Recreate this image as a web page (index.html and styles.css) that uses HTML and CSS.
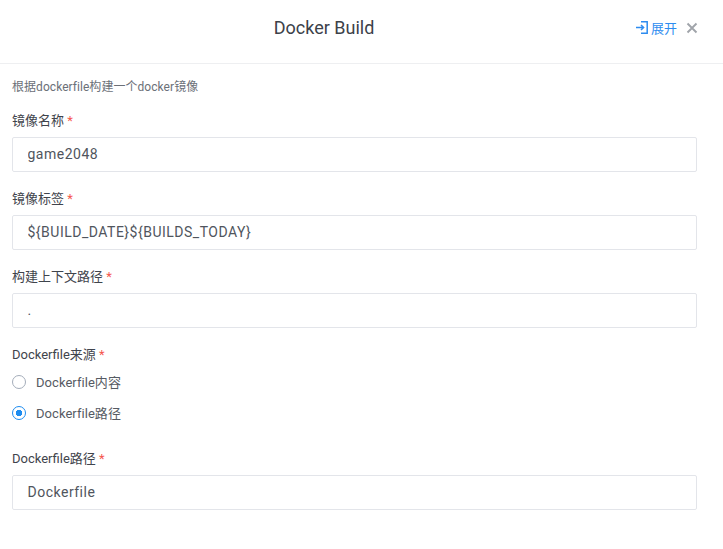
FILE: index.html
```html
<!DOCTYPE html>
<html lang="en">

<head>
    <meta charset="UTF-8">
    <meta name="viewport" content="width=device-width, initial-scale=1.0">
    <title>Docker Build</title>
    <link rel="stylesheet" href="styles.css">
</head>

<body>

    <header class="panel-header">
        <h1 class="panel-title">Docker Build</h1>
        <div class="panel-actions">
            <a class="expand-link">
                <svg class="expand-icon" width="12" height="13" viewBox="0 0 12 13" fill="none" stroke="#2d8cf0" stroke-width="1.5">
                    <path d="M5 .8h6.200v11.400H5" />
                    <path d="M0 6.500h7.500M5 4l2.600 2.500L5 9" />
                </svg>
                <span>展开</span>
            </a>
            <svg class="close-icon" width="12" height="12" viewBox="0 0 12 12" fill="none" stroke="#a0a4aa" stroke-width="1.9">
                <path d="M1.500 1.500l9 9M10.500 1.500l-9 9" />
            </svg>
        </div>
    </header>

    <form class="panel-body">
        <p class="hint">根据dockerfile构建一个docker镜像</p>

        <div class="field">
            <label class="field-label">镜像名称 <span class="required">*</span></label>
            <input class="text-input" type="text" value="game2048">
        </div>

        <div class="field">
            <label class="field-label">镜像标签 <span class="required">*</span></label>
            <input class="text-input" type="text" value="${BUILD_DATE}${BUILDS_TODAY}">
        </div>

        <div class="field">
            <label class="field-label">构建上下文路径 <span class="required">*</span></label>
            <input class="text-input" type="text" value=".">
        </div>

        <div class="field field-radio">
            <label class="field-label label-tight">Dockerfile来源 <span class="required">*</span></label>
            <div class="radio-row">
                <span class="radio"></span>
                <span class="radio-text">Dockerfile内容</span>
            </div>
            <div class="radio-row">
                <span class="radio radio-checked"></span>
                <span class="radio-text">Dockerfile路径</span>
            </div>
        </div>

        <div class="field">
            <label class="field-label">Dockerfile路径 <span class="required">*</span></label>
            <input class="text-input" type="text" value="Dockerfile">
        </div>
    </form>

</body>

</html>
```

FILE: styles.css
```css
* {
    box-sizing: border-box;
}

body {
    margin: 0;
    background-color: white;
    font-family: Roboto, "Noto Sans CJK SC", sans-serif;
    color: #4a4f57;
}

.panel-header {
    position: relative;
    height: 64px;
    border-bottom: 1px solid #eeeff1;
    display: flex;
    align-items: center;
    justify-content: center;
    padding: 0 75px 9px 0;
}

.panel-title {
    margin: 0;
    font-size: 18px;
    font-weight: 400;
    color: #3c4149;
}

.panel-actions {
    position: absolute;
    top: 18px;
    right: 25px;
    display: flex;
    align-items: center;
    gap: 9px;
}

.expand-link {
    display: flex;
    align-items: center;
    gap: 3px;
    font-size: 13px;
    color: #2d8cf0;
}

.panel-body {
    padding: 14px 26px 0 12px;
}

.hint {
    margin: 0 0 16px;
    font-size: 12px;
    line-height: 18px;
    letter-spacing: 0.05px;
    color: #6b7078;
}

.field {
    margin-bottom: 18px;
}

.field-label {
    display: block;
    margin-bottom: 7px;
    font-size: 13px;
    line-height: 18px;
    color: #3f444c;
}

.label-tight {
    margin-bottom: 2px;
}

.required {
    color: #f5564e;
}

.text-input {
    display: block;
    width: 100%;
    height: 35px;
    padding: 0 14.5px 2px;
    border: 1px solid #e3e5ea;
    border-radius: 2px;
    font-family: inherit;
    font-size: 14px;
    letter-spacing: 0.5px;
    color: #50555d;
    outline: none;
}

.field-radio {
    margin-bottom: 22px;
}

.radio-row {
    display: flex;
    align-items: center;
    height: 31px;
    gap: 10px;
}

.radio {
    width: 14px;
    height: 14px;
    border: 1.5px solid #a4adba;
    border-radius: 50%;
}

.radio-checked {
    border-color: #1d8cf0;
    background: radial-gradient(circle, #1d8cf0 0, #1d8cf0 3px, white 3.5px);
}

.radio-text {
    font-size: 13px;
    letter-spacing: 0.05px;
    color: #565b63;
}
```
